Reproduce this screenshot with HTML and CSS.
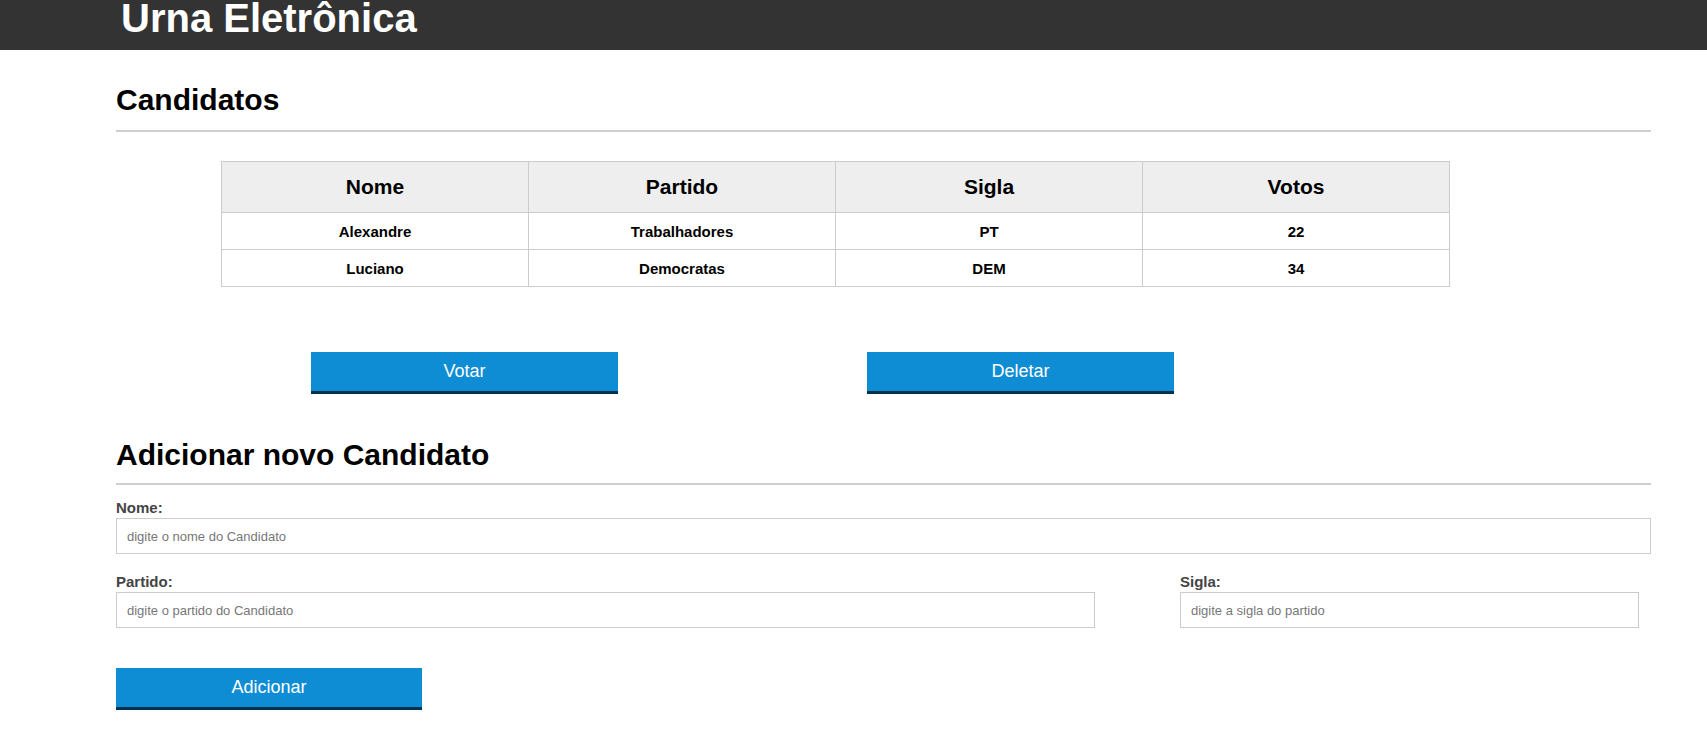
FILE: index.html
```html
<!DOCTYPE html>
<html lang="pt-BR">
<head>
<meta charset="utf-8">
<title>Urna Eletrônica</title>
<link rel="stylesheet" href="styles.css">
</head>
<body>
<header class="topbar">
  <h1 class="brand">Urna Eletrônica</h1>
</header>
<main class="container">
  <section class="block">
    <h2 class="section-title">Candidatos</h2>
    <table class="candidates">
      <thead>
        <tr><th>Nome</th><th>Partido</th><th>Sigla</th><th>Votos</th></tr>
      </thead>
      <tbody>
        <tr><td>Alexandre</td><td>Trabalhadores</td><td>PT</td><td>22</td></tr>
        <tr><td>Luciano</td><td>Democratas</td><td>DEM</td><td>34</td></tr>
      </tbody>
    </table>
    <div class="actions">
      <button class="btn btn-vote" type="button">Votar</button>
      <button class="btn btn-delete" type="button">Deletar</button>
    </div>
  </section>
  <section class="block">
    <h2 class="section-title section-title--add">Adicionar novo Candidato</h2>
    <form class="form">
      <div class="field">
        <label class="label" for="nome">Nome:</label>
        <input class="input" id="nome" type="text" placeholder="digite o nome do Candidato">
      </div>
      <div class="row">
        <div class="field">
          <label class="label" for="partido">Partido:</label>
          <input class="input" id="partido" type="text" placeholder="digite o partido do Candidato">
        </div>
        <div class="field">
          <label class="label" for="sigla">Sigla:</label>
          <input class="input" id="sigla" type="text" placeholder="digite a sigla do partido">
        </div>
      </div>
      <button class="btn btn-add" type="button">Adicionar</button>
    </form>
  </section>
</main>
</body>
</html>
```
FILE: styles.css
```css
* { box-sizing: border-box; }

body {
  margin: 0;
  font-family: "Liberation Sans", Arial, sans-serif;
  color: #000;
  background: #fff;
}

.topbar {
  background: #333;
  height: 50px;
  padding-left: 121px;
  overflow: hidden;
}

.brand {
  margin: 0;
  font-size: 40px;
  line-height: 36px;
  font-weight: bold;
  color: #fff;
}

.container {
  margin-left: 116px;
  width: 1535px;
}

.section-title {
  margin: 0;
  font-size: 30px;
  line-height: 34px;
  font-weight: bold;
  padding-top: 33px;
  padding-bottom: 13px;
  border-bottom: 2px solid #cfcfcf;
}

.section-title--add {
  padding-top: 44px;
  padding-bottom: 11px;
}

.candidates {
  margin-top: 29px;
  margin-left: 105px;
  width: 1229px;
  border-collapse: collapse;
  table-layout: fixed;
}

.candidates th,
.candidates td {
  border: 1px solid #cccccc;
  text-align: center;
  padding: 0;
  font-weight: bold;
}

.candidates th {
  background: #eeeeee;
  font-size: 21px;
  height: 51px;
}

.candidates td {
  font-size: 15px;
  height: 37px;
}

.actions {
  display: flex;
  margin-top: 65px;
  padding-left: 195px;
  gap: 249px;
}

.btn {
  width: 307px;
  height: 42px;
  border: 0;
  border-bottom: 3px solid #00324f;
  background: #0e8dd4;
  color: #fff;
  font-family: "Liberation Sans", Arial, sans-serif;
  font-size: 18px;
  padding: 0;
  cursor: pointer;
}

.form {
  padding-top: 14px;
}

.field {
  display: flex;
  flex-direction: column;
}

.label {
  font-size: 15px;
  line-height: 17px;
  font-weight: bold;
  color: #444;
  margin-bottom: 2px;
}

.input {
  height: 36px;
  border: 1px solid #cccccc;
  padding: 0 10px;
  font-family: "Liberation Sans", Arial, sans-serif;
  font-size: 13px;
  color: #333;
  width: 100%;
}

.input::placeholder {
  color: #777;
}

.row {
  display: grid;
  grid-template-columns: 979px 459px;
  column-gap: 85px;
  margin-top: 19px;
}

.btn-add {
  margin-top: 40px;
  width: 306px;
}
```
